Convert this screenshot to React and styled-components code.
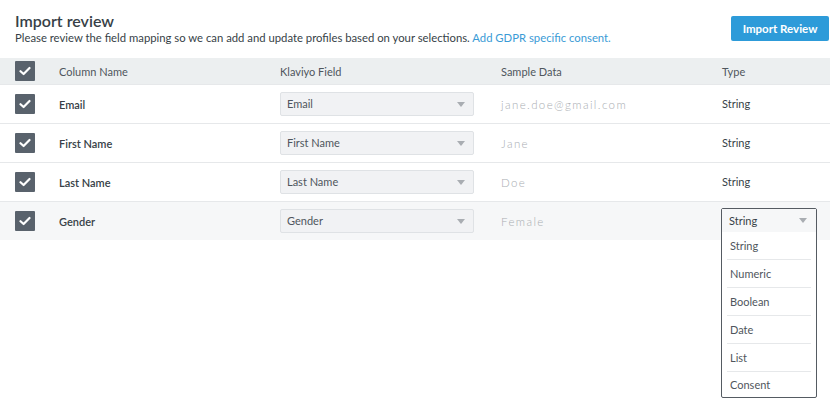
import React from 'react'
import styled, { createGlobalStyle } from 'styled-components'

const GlobalStyle = createGlobalStyle`
  body {
    margin: 0;
    background: #ffffff;
    font-family: 'Lato', 'Open Sans', sans-serif;
    color: #373f47;
  }
  * {
    box-sizing: border-box;
  }
`

const rows = [
  { name: 'Email', field: 'Email', sample: 'jane.doe@gmail.com', type: 'String' },
  { name: 'First Name', field: 'First Name', sample: 'Jane', type: 'String' },
  { name: 'Last Name', field: 'Last Name', sample: 'Doe', type: 'String' },
  { name: 'Gender', field: 'Gender', sample: 'Female', type: 'String', open: true },
]

const typeOptions = ['String', 'Numeric', 'Boolean', 'Date', 'List', 'Consent']

function CheckIcon() {
  return (
    <svg width="12" height="10" viewBox="0 0 12 10">
      <path
        d="M1.5 5.2 L4.6 8 L10.5 2"
        fill="none"
        stroke="#ffffff"
        strokeWidth="2.2"
        strokeLinecap="round"
        strokeLinejoin="round"
      />
    </svg>
  )
}

function Caret() {
  return (
    <svg width="8" height="5" viewBox="0 0 8 5">
      <path d="M0 0 L8 0 L4 5 Z" fill="#a9adb2" />
    </svg>
  )
}

function App() {
  return (
    <Page>
      <GlobalStyle />
      <Header>
        <div>
          <Title>Import review</Title>
          <Subtitle>
            Please review the field mapping so we can add and update profiles based on your
            selections. <Link>Add GDPR specific consent.</Link>
          </Subtitle>
        </div>
        <PrimaryButton>Import Review</PrimaryButton>
      </Header>

      <Table>
        <HeadRow>
          <CheckCell>
            <Checkbox>
              <CheckIcon />
            </Checkbox>
          </CheckCell>
          <HeadCell>Column Name</HeadCell>
          <HeadCell>Klaviyo Field</HeadCell>
          <HeadCell>Sample Data</HeadCell>
          <HeadCell>Type</HeadCell>
        </HeadRow>

        {rows.map((r) => (
          <Row key={r.name} $active={r.open}>
            <CheckCell>
              <Checkbox>
                <CheckIcon />
              </Checkbox>
            </CheckCell>
            <NameCell>{r.name}</NameCell>
            <div>
              <Select>
                <span>{r.field}</span>
                <Caret />
              </Select>
            </div>
            <SampleCell>{r.sample}</SampleCell>
            <TypeCell>
              {r.open ? (
                <Dropdown>
                  <DropdownHead>
                    <span>{r.type}</span>
                    <Caret />
                  </DropdownHead>
                  {typeOptions.map((o, i) => (
                    <Option key={o} $last={i === typeOptions.length - 1}>
                      {o}
                    </Option>
                  ))}
                </Dropdown>
              ) : (
                r.type
              )}
            </TypeCell>
          </Row>
        ))}
      </Table>
    </Page>
  )
}

const Page = styled.div`
  width: 832px;
  height: 400px;
  overflow: hidden;
  padding-right: 2px;
`

const Header = styled.div`
  display: flex;
  justify-content: space-between;
  align-items: flex-start;
  padding: 10px 1px 0 15px;
  height: 58px;
`

const Title = styled.h1`
  margin: 0;
  font-size: 16px;
  font-weight: 600;
  line-height: 21px;
  color: #373f47;
`

const Subtitle = styled.p`
  margin: 0;
  font-size: 11.3px;
  line-height: 14px;
  color: #373f47;
`

const Link = styled.span`
  color: #3a9bd6;
`

const PrimaryButton = styled.button`
  margin-top: 6px;
  width: 98px;
  height: 25px;
  border: none;
  border-radius: 2px;
  background: #2d9bd9;
  color: #ffffff;
  font-family: 'Lato', sans-serif;
  font-size: 11.5px;
  font-weight: 700;
  padding: 0;
`

const Table = styled.div`
  display: flex;
  flex-direction: column;
`

const gridCols = `
  display: grid;
  grid-template-columns: 59px 221px 221px 221px 1fr;
  align-items: center;
`

const HeadRow = styled.div`
  ${gridCols}
  height: 26px;
  background: #eceff0;
`

const Row = styled.div`
  ${gridCols}
  height: 39px;
  border-top: 1px solid #e6e8ea;
  background: ${(p) => (p.$active ? '#f6f7f8' : '#ffffff')};
  &:first-of-type {
    border-top: none;
  }
`

const CheckCell = styled.div`
  padding-left: 15px;
  display: flex;
  align-items: center;
`

const Checkbox = styled.div`
  width: 20px;
  height: 20px;
  border-radius: 1px;
  background: #59626c;
  display: flex;
  align-items: center;
  justify-content: center;
`

const HeadCell = styled.div`
  font-size: 11px;
  color: #4f565d;
`

const NameCell = styled.div`
  font-size: 11px;
  font-weight: 600;
  color: #373f47;
`

const Select = styled.div`
  width: 194px;
  height: 24px;
  border: 1px solid #dfe2e5;
  border-radius: 2px;
  background: #f1f2f4;
  display: flex;
  align-items: center;
  justify-content: space-between;
  padding: 0 8px 0 6px;
  font-size: 11px;
  color: #4f565d;
  span {
    margin-top: -2px;
  }
`

const SampleCell = styled.div`
  font-size: 11.5px;
  letter-spacing: 1.4px;
  font-weight: 300;
  color: #a9adb2;
`

const TypeCell = styled.div`
  position: relative;
  min-height: 14px;
  font-size: 11px;
  color: #373f47;
`

const Dropdown = styled.div`
  position: absolute;
  left: -1px;
  top: -6px;
  width: 96px;
  border: 1px solid #555b62;
  border-radius: 2px;
  background: #ffffff;
  z-index: 2;
`

const DropdownHead = styled.div`
  height: 23px;
  background: #f6f7f8;
  display: flex;
  align-items: center;
  justify-content: space-between;
  padding: 0 9px 0 7px;
  font-size: 11px;
  color: #373f47;
`

const Option = styled.div`
  margin: 0 5px;
  height: ${(p) => (p.$last ? '25px' : '28px')};
  padding-left: 3px;
  display: flex;
  align-items: center;
  border-bottom: ${(p) => (p.$last ? 'none' : '1px solid #e6e8ea')};
  font-size: 11px;
  color: #4f565d;
`

export default App
